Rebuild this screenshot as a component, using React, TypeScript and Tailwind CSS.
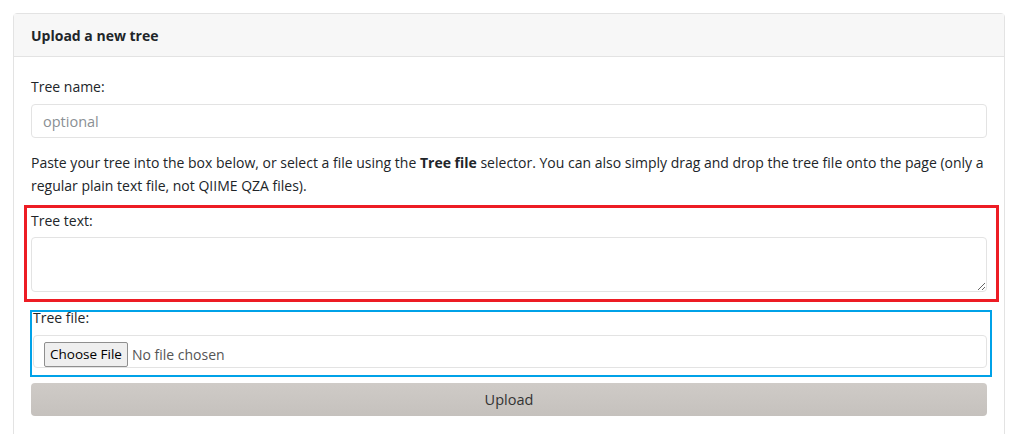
export default function App() {
  return (
    <div className="min-h-screen bg-white pt-[13px] pl-[13px] text-[14px] text-[#212529] font-['Open_Sans','Noto_Sans',sans-serif]">
      <div className="w-[992px] rounded-t-[4px] border border-[#e3e3e3]">
        {/* Card header */}
        <div className="flex h-[43px] items-center border-b border-[#e3e3e3] bg-[#f7f7f7] px-[17px] font-bold">
          Upload a new tree
        </div>

        {/* Card body */}
        <div className="px-[17px] pt-[19px] pb-[20px]">
          <div className="leading-[22px]">Tree name:</div>
          <input
            placeholder="optional"
            className="mt-[6px] block h-[34px] w-full rounded-[4px] border border-[#e3e3e3] px-[11px] text-[14.5px] placeholder:text-[#8a8f94]"
          />

          <p className="mt-[13px] leading-[23px]">
            Paste your tree into the box below, or select a file using the <b>Tree file</b> selector. You can
            also simply drag and drop the tree file onto the page (only a regular plain text file, not QIIME QZA
            files).
          </p>

          {/* Tree text */}
          <div className="mt-[8px] -ml-[7px] -mr-[12px] border-[3px] border-[#ed1c24] pt-[2px] pr-[9px] pb-[7px] pl-[4px]">
            <div className="leading-[22px]">Tree text:</div>
            <textarea className="mt-[5px] block h-[55px] w-full rounded-[4px] border border-[#e3e3e3]" />
          </div>

          {/* Tree file */}
          <div className="mt-[8px] -ml-[1px] -mr-[5px] border-2 border-[#00a2e8] pr-[3px] pb-[7px] pl-[1px]">
            <div className="-mt-[2px] leading-[16px]">Tree file:</div>
            <div className="mt-[9px] flex h-[33px] items-end rounded-[4px] border border-[#e3e3e3] pl-[10px]">
              <span className="rounded-[2px] border border-[#8f8f8f] bg-[#efefef] px-[5px] text-[13.5px] leading-[23px] text-black">
                Choose File
              </span>
              <span className="ml-[4px] text-[14px] leading-[25px] text-[#555]">No file chosen</span>
            </div>
          </div>

          <button className="mt-[6px] block h-[33px] w-full rounded-[4px] bg-gradient-to-b from-[#cfcbc7] to-[#c5c1bd] text-[14.5px] text-[#333]">
            Upload
          </button>
        </div>
      </div>
    </div>
  );
}
